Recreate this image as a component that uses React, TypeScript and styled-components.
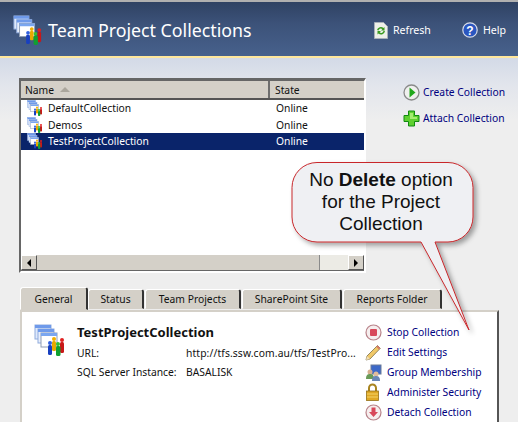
import React from "react";
import styled, { createGlobalStyle } from "styled-components";

const Global = createGlobalStyle`
  html, body { margin: 0; padding: 0; background: #eeeeee; }
  * { box-sizing: border-box; }
`;

const Page = styled.div`
  position: relative;
  width: 518px;
  height: 422px;
  overflow: hidden;
  background: linear-gradient(#d3dae7 58px, #e2e5ec 85px, #eeeeee 120px);
  font-family: "Noto Sans", "Liberation Sans", sans-serif;
  font-size: 10.3px;
  color: #111;
  display: flex;
  flex-direction: column;
`;

const Header = styled.header`
  height: 58px;
  flex: none;
  border-top: 2px solid #b0b0b0;
  border-bottom: 2px solid #ffe79c;
  background: linear-gradient(#2f4263, #3c5279 40%, #47618c);
  display: flex;
  align-items: center;
  padding: 2px 12px 0 13px;
  color: #fff;
`;

const Title = styled.h1`
  margin: 0 0 0 5px;
  font-size: 17.8px;
  font-weight: 400;
  flex: 1;
  white-space: nowrap;
`;

const HeaderLink = styled.span`
  display: flex;
  align-items: center;
  gap: 5px;
  font-size: 10.6px;
  margin-left: 31px;
`;

const Top = styled.section`
  display: flex;
  padding: 20px 0 0 19px;
  flex: none;
`;

const ListFrame = styled.div`
  width: 347px;
  height: 195px;
  border: 2px solid;
  border-top-width: 3px;
  border-color: #666 #fff #fff #666;
  background: #fff;
  display: flex;
  flex-direction: column;
`;

const Head = styled.div`
  display: grid;
  grid-template-columns: 249px 1fr;
  height: 19px;
  flex: none;
  background: #d4d0c8;
  border-bottom: 2px solid #555;
`;

const HeadCell = styled.div`
  display: flex;
  align-items: center;
  gap: 6px;
  padding-left: 4px;
  border-right: 2px solid #6e6e6e;
  &:last-child { border-right: 0; padding-left: 5px; }
`;

const SortArrow = styled.i`
  width: 0;
  height: 0;
  border-left: 5px solid transparent;
  border-right: 5px solid transparent;
  border-bottom: 5px solid #aaa69c;
`;

const Rows = styled.div`
  flex: 1;
  display: flex;
  flex-direction: column;
`;

const Row = styled.div<{ $selected?: boolean }>`
  display: grid;
  grid-template-columns: 249px 1fr;
  height: 16.5px;
  align-items: center;
  background: ${(p) => (p.$selected ? "#0a246a" : "transparent")};
  color: ${(p) => (p.$selected ? "#fff" : "#111")};
`;

const NameCell = styled.div`
  display: flex;
  align-items: center;
  gap: 5px;
  padding-left: 6px;
`;

const StateCell = styled.div`
  padding-left: 6px;
`;

const HScroll = styled.div`
  height: 16px;
  flex: none;
  display: flex;
  background: #ecebe5;
  border-bottom: 1px solid #666;
`;

const ScrollButton = styled.div`
  width: 16px;
  flex: none;
  background: #d4d0c8;
  border: 1px solid;
  border-color: #fff #555 #555 #fff;
  display: flex;
  align-items: center;
  justify-content: center;
`;

const Thumb = styled.div`
  width: 283px;
  background: #d4d0c8;
  border-right: 1px solid #8a8a8a;
`;

const Spacer = styled.div`
  flex: 1;
`;

const Arrow = styled.i<{ $right?: boolean }>`
  width: 0;
  height: 0;
  border-top: 4px solid transparent;
  border-bottom: 4px solid transparent;
  ${(p) => (p.$right ? "border-left: 4px solid #000;" : "border-right: 4px solid #000;")}
`;

const SideActions = styled.nav`
  display: flex;
  flex-direction: column;
  gap: 8px;
  padding: 5px 0 0 37px;
`;

const ActionLink = styled.a`
  display: flex;
  align-items: center;
  gap: 3px;
  height: 18px;
  color: #00007f;
  white-space: nowrap;
`;

const Tabs = styled.div`
  display: flex;
  padding: 14px 0 0 20px;
  height: 37px;
  flex: none;
`;

const Tab = styled.div<{ $active?: boolean; $w: number }>`
  width: ${(p) => p.$w}px;
  height: ${(p) => (p.$active ? 23 : 20)}px;
  margin-top: ${(p) => (p.$active ? 0 : 2)}px;
  margin-right: ${(p) => (p.$active ? 0 : 1)}px;
  background: #d4d0c8;
  border: 1px solid;
  border-color: #fff #333 transparent #fff;
  border-right-width: 2px;
  border-radius: 3px 3px 0 0;
  display: flex;
  align-items: center;
  justify-content: center;
  white-space: nowrap;
`;

const Panel = styled.div`
  width: 479px;
  margin-left: 20px;
  flex: 1;
  background: #fff;
  border-top: 2px solid #d4d0c8;
  border-left: 2px solid #d4d0c8;
  border-right: 2px solid #555;
  display: flex;
  padding: 12px 0 0 12px;
`;

const PanelIcon = styled.div`
  width: 43px;
  flex: none;
`;

const Details = styled.div`
  width: 288px;
  flex: none;
  margin-top: -1px;
`;

const Name = styled.div`
  font-size: 13px;
  font-weight: 700;
  line-height: 18px;
  margin-bottom: 2px;
`;

const Field = styled.div`
  display: grid;
  grid-template-columns: 109px 1fr;
  height: 19px;
  align-items: center;
  white-space: nowrap;
`;

const FieldValue = styled.span`
  letter-spacing: 0.12px;
`;

const PanelActions = styled.nav`
  display: flex;
  flex-direction: column;
  gap: 2px;
  margin-top: -1px;
`;

const PanelAction = styled(ActionLink)`
  gap: 5px;
`;

const CalloutLayer = styled.div`
  position: absolute;
  left: 288px;
  top: 158px;
  width: 200px;
  height: 180px;
`;

const CalloutText = styled.div`
  position: absolute;
  left: 3px;
  top: 11px;
  width: 180px;
  text-align: center;
  font-family: "Liberation Sans", Arial, sans-serif;
  font-size: 19px;
  line-height: 21.8px;
  color: #111;
`;

const CollectionIcon = ({ size }: { size: number }) => (
  <svg width={size} height={size} viewBox="0 0 32 32">
    <rect x="1" y="1" width="16" height="14" fill="#dfe9fb" stroke="#8fabdd" />
    <rect x="1" y="1" width="16" height="3" fill="#6f9aea" />
    <rect x="4" y="5" width="16" height="14" fill="#e8effc" stroke="#8fabdd" />
    <rect x="4" y="5" width="16" height="3" fill="#6f9aea" />
    <rect x="7" y="9" width="16" height="14" fill="#fff" stroke="#8f9db4" />
    <rect x="7" y="9" width="16" height="3" fill="#7aa6f0" />
    <circle cx="20" cy="15" r="2" fill="#f0b000" />
    <rect x="18" y="17" width="4" height="10" rx="1.500" fill="#e8a800" />
    <circle cx="28" cy="16" r="2" fill="#e02020" />
    <rect x="26" y="18" width="4" height="11" rx="1.500" fill="#c81818" />
    <circle cx="16" cy="19" r="2" fill="#3060e0" />
    <rect x="14" y="21" width="4" height="10" rx="1.500" fill="#1840c0" />
    <circle cx="24" cy="20" r="2" fill="#30c030" />
    <rect x="22" y="22" width="4.500" height="10" rx="1.500" fill="#10a030" />
  </svg>
);

const RefreshIcon = () => (
  <svg width="14" height="17" viewBox="0 0 14 17">
    <path d="M.5.500h9l4 4v12H.5z" fill="#eef0e8" stroke="#a8b0b8" />
    <path d="M3 8a4 4 0 0 1 6.500-2l1-1v3.500H7l1.300-1.300A2.300 2.300 0 0 0 4.500 8.500z" fill="#3a9a20" />
    <path d="M11 9a4 4 0 0 1-6.500 2.500l-1 1V9H7l-1.300 1.300A2.300 2.300 0 0 0 9.500 8.800z" fill="#3a9a20" />
  </svg>
);

const HelpIcon = () => (
  <svg width="16" height="16" viewBox="0 0 16 16">
    <circle cx="8" cy="8" r="7.200" fill="#2a56c0" stroke="#d8dce8" strokeWidth="1.200" />
    <text x="8" y="12.500" textAnchor="middle" fontSize="12" fontWeight="700" fontFamily="Liberation Sans" fill="#fff">?</text>
  </svg>
);

const PlayIcon = () => (
  <svg width="17" height="17" viewBox="0 0 17 17">
    <circle cx="8.500" cy="8.500" r="7.500" fill="#f0f0ee" stroke="#8a8a8a" strokeWidth="1.300" />
    <path d="M6.500 3.500v10l6-5z" fill="#22a81c" />
  </svg>
);

const PlusIcon = () => (
  <svg width="17" height="17" viewBox="0 0 17 17">
    <path d="M5.500 1h6v4.500H16v6h-4.500V16h-6v-4.500H1v-6h4.500z" fill="#5fd030" stroke="#118a10" />
    <path d="M7 3h3v4h4v2H7z" fill="#a4ec70" />
  </svg>
);

const StopIcon = () => (
  <svg width="17" height="17" viewBox="0 0 17 17">
    <circle cx="8.500" cy="8.500" r="7.500" fill="#f6eeee" stroke="#b8838a" strokeWidth="1.200" />
    <rect x="5" y="5" width="7" height="7" rx="1" fill="#d8485a" />
  </svg>
);

const DetachIcon = () => (
  <svg width="17" height="17" viewBox="0 0 17 17">
    <circle cx="8.500" cy="8.500" r="7.500" fill="#f6eeee" stroke="#b8838a" strokeWidth="1.200" />
    <path d="M6.500 3.500h4V8h2.500l-4.500 5L4 8h2.500z" fill="#d8485a" />
  </svg>
);

const PencilIcon = () => (
  <svg width="17" height="17" viewBox="0 0 17 17">
    <path d="M1 16l1-4L12.500 1.500l2.800 2.800L5 15z" fill="#f0c868" stroke="#6a5f3a" strokeWidth="0.700" />
    <path d="M1 16l1-4 3 3z" fill="#f2dfb8" />
    <path d="M12.500 1.500l2.800 2.800-1.300 1.300-2.800-2.800z" fill="#d87868" />
  </svg>
);

const GroupIcon = () => (
  <svg width="17" height="17" viewBox="0 0 17 17">
    <rect x="6" y="1" width="10" height="9" fill="#3c68c8" stroke="#6a7a98" />
    <circle cx="5" cy="8" r="2.500" fill="#d8b090" />
    <path d="M1 15c0-4 1.500-5 4-5s4 1 4 5z" fill="#6a9a58" />
    <circle cx="11" cy="10" r="2.500" fill="#e0bc9c" />
    <path d="M7 17c0-4 1.500-5 4-5s4 1 4 5z" fill="#6a88b8" />
  </svg>
);

const LockIcon = () => (
  <svg width="17" height="18" viewBox="0 0 17 18">
    <path d="M4 8V5a3.500 3.500 0 0 1 7 0v3" fill="none" stroke="#a88420" strokeWidth="2" />
    <rect x="1.500" y="8" width="12" height="9.500" fill="#e0a824" stroke="#94701a" strokeWidth="0.800" />
    <path d="M2 11h11M2 14h11" stroke="#f4d468" />
  </svg>
);

const collections = ["DefaultCollection", "Demos", "TestProjectCollection"];
const tabs: [string, number][] = [
  ["General", 68],
  ["Status", 56],
  ["Team Projects", 96],
  ["SharePoint Site", 100],
  ["Reports Folder", 99],
];
const panelActions: [React.ReactNode, string][] = [
  [<StopIcon key="s" />, "Stop Collection"],
  [<PencilIcon key="p" />, "Edit Settings"],
  [<GroupIcon key="g" />, "Group Membership"],
  [<LockIcon key="l" />, "Administer Security"],
  [<DetachIcon key="d" />, "Detach Collection"],
];

export default function App() {
  return (
    <Page>
      <Global />
      <Header>
        <CollectionIcon size={30} />
        <Title>Team Project Collections</Title>
        <HeaderLink><RefreshIcon />Refresh</HeaderLink>
        <HeaderLink><HelpIcon />Help</HeaderLink>
      </Header>
      <Top>
        <ListFrame>
          <Head>
            <HeadCell>Name <SortArrow /></HeadCell>
            <HeadCell>State</HeadCell>
          </Head>
          <Rows>
            {collections.map((c, i) => (
              <Row key={c} $selected={i === 2}>
                <NameCell><CollectionIcon size={16} />{c}</NameCell>
                <StateCell>Online</StateCell>
              </Row>
            ))}
          </Rows>
          <HScroll>
            <ScrollButton><Arrow /></ScrollButton>
            <Thumb />
            <Spacer />
            <ScrollButton><Arrow $right /></ScrollButton>
          </HScroll>
        </ListFrame>
        <SideActions>
          <ActionLink><PlayIcon />Create Collection</ActionLink>
          <ActionLink><PlusIcon />Attach Collection</ActionLink>
        </SideActions>
      </Top>
      <Tabs>
        {tabs.map(([t, w], i) => (
          <Tab key={t} $w={w} $active={i === 0}>{t}</Tab>
        ))}
      </Tabs>
      <Panel>
        <PanelIcon><CollectionIcon size={32} /></PanelIcon>
        <Details>
          <Name>TestProjectCollection</Name>
          <Field><span>URL:</span><FieldValue>http://tfs.ssw.com.au/tfs/TestPro...</FieldValue></Field>
          <Field><span>SQL Server Instance:</span><span>BASALISK</span></Field>
        </Details>
        <PanelActions>
          {panelActions.map(([icon, label]) => (
            <PanelAction key={label}>{icon}{label}</PanelAction>
          ))}
        </PanelActions>
      </Panel>
      <CalloutLayer>
        <svg width="200" height="180" viewBox="0 0 200 180">
          <defs>
            <filter id="sh" x="-10%" y="-10%" width="125%" height="125%">
              <feDropShadow dx="3" dy="3" stdDeviation="2.500" floodColor="#000" floodOpacity="0.35" />
            </filter>
          </defs>
          <path
            d="M29 4.500H160a25 25 0 0 1 25 25V59a25 25 0 0 1-25 25H147L181 172 L133 84H29a25 25 0 0 1-25-25V29.500a25 25 0 0 1 25-25z"
            fill="#eff0f3"
            stroke="#c8282c"
            strokeWidth="1"
            filter="url(#sh)"
          />
        </svg>
        <CalloutText>No <b>Delete</b> option<br />for the Project<br />Collection</CalloutText>
      </CalloutLayer>
    </Page>
  );
}
